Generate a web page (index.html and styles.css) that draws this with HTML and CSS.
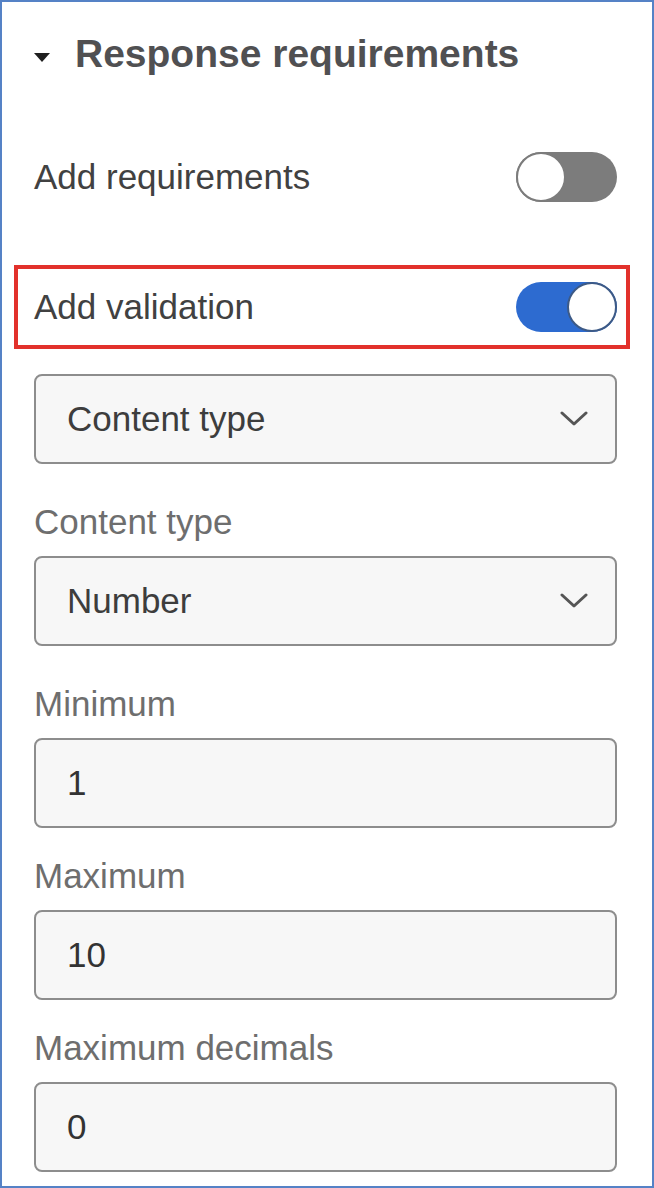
FILE: index.html
```html
<!DOCTYPE html>
<html lang="en">
<head>
<meta charset="utf-8">
<title>Response requirements</title>
<link rel="stylesheet" href="styles.css">
</head>
<body>
<div class="panel">
  <div class="header">
    <span class="caret"></span>
    <h2 class="title">Response requirements</h2>
  </div>

  <div class="row req">
    <span class="row-label">Add requirements</span>
    <span class="toggle off"><span class="knob"></span></span>
  </div>

  <div class="highlight">
    <div class="row">
      <span class="row-label">Add validation</span>
      <span class="toggle on"><span class="knob"></span></span>
    </div>
  </div>

  <div class="select first">
    <span class="select-text">Content type</span>
    <svg class="chevron" width="28" height="16" viewBox="0 0 28 16"><path d="M2 2 L14 13 L26 2" fill="none" stroke="#555" stroke-width="3" stroke-linecap="round" stroke-linejoin="round"/></svg>
  </div>

  <div class="field">
    <label class="field-label">Content type</label>
    <div class="select">
      <span class="select-text">Number</span>
      <svg class="chevron" width="28" height="16" viewBox="0 0 28 16"><path d="M2 2 L14 13 L26 2" fill="none" stroke="#555" stroke-width="3" stroke-linecap="round" stroke-linejoin="round"/></svg>
    </div>
  </div>

  <div class="field">
    <label class="field-label">Minimum</label>
    <input class="text-input" type="text" value="1" readonly>
  </div>

  <div class="field tight">
    <label class="field-label">Maximum</label>
    <input class="text-input" type="text" value="10" readonly>
  </div>

  <div class="field tight">
    <label class="field-label">Maximum decimals</label>
    <input class="text-input" type="text" value="0" readonly>
  </div>
</div>
</body>
</html>
```

FILE: styles.css
```css
html, body {
  margin: 0;
  padding: 0;
  background: #ffffff;
}

.panel {
  box-sizing: border-box;
  width: 654px;
  height: 1188px;
  border: 2px solid #5582c6;
  padding: 30px 35px 0 32px;
  font-family: "Liberation Sans", Arial, sans-serif;
  color: #3f3f3f;
  overflow: hidden;
}

.header {
  display: flex;
  align-items: center;
  height: 44px;
}

.caret {
  width: 0;
  height: 0;
  border-left: 8px solid transparent;
  border-right: 8px solid transparent;
  border-top: 9px solid #1f1f1f;
  margin: 6px 25px 0 0;
}

.title {
  margin: 0;
  font-size: 39px;
  line-height: 44px;
  font-weight: 700;
  color: #505052;
}

.row {
  display: flex;
  align-items: center;
  justify-content: space-between;
}

.req {
  margin-top: 76px;
  height: 50px;
}

.row-label {
  font-size: 35px;
  line-height: 40px;
  color: #414141;
}

.toggle {
  box-sizing: border-box;
  display: flex;
  width: 101px;
  height: 50px;
  border-radius: 25px;
}

.toggle.off {
  background: #7c7c7c;
  justify-content: flex-start;
}

.toggle.on {
  background: #2d6bd0;
  justify-content: flex-end;
}

.knob {
  box-sizing: border-box;
  width: 50px;
  height: 50px;
  border-radius: 50%;
  background: #ffffff;
}

.toggle.off .knob {
  border: 2px solid #7c7c7c;
}

.toggle.on .knob {
  border: 2px solid #3d5a86;
}

.highlight {
  margin: 63px -13px 0 -20px;
  border: 4px solid #e2312b;
  padding: 0 9px 0 16px;
}

.highlight .row {
  height: 76px;
}

.select {
  box-sizing: border-box;
  display: flex;
  align-items: center;
  justify-content: space-between;
  height: 90px;
  padding: 0 27px 0 31px;
  border: 2px solid #8d8d8d;
  border-radius: 8px;
  background: #f7f7f7;
}

.select.first {
  margin-top: 25px;
}

.select-text {
  font-size: 35px;
  line-height: 40px;
  color: #3d3d3d;
}

.field {
  margin-top: 38px;
}

.field.tight {
  margin-top: 28px;
}

.field-label {
  display: block;
  font-size: 35px;
  line-height: 40px;
  color: #6e6e6e;
  margin-bottom: 14px;
}

.text-input {
  box-sizing: border-box;
  display: block;
  width: 100%;
  height: 90px;
  margin: 0;
  padding: 0 31px;
  border: 2px solid #8d8d8d;
  border-radius: 8px;
  background: #f7f7f7;
  font-family: "Liberation Sans", Arial, sans-serif;
  font-size: 35px;
  color: #333333;
  outline: none;
}
```
